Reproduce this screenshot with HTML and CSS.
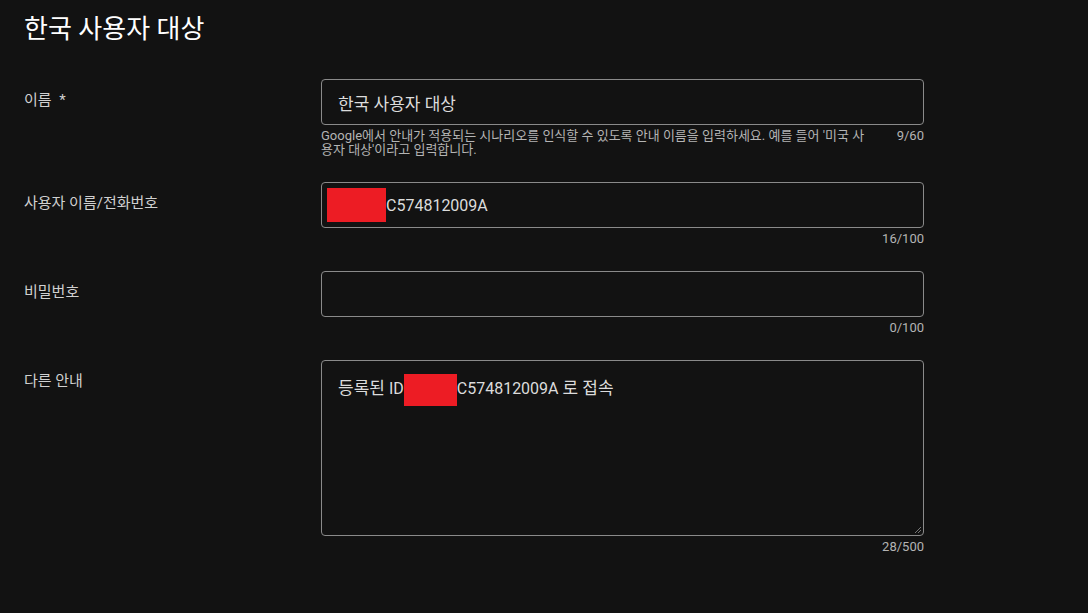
FILE: index.html
```html
<!DOCTYPE html>
<html lang="ko">
<head>
  <meta charset="UTF-8">
  <meta name="viewport" content="width=device-width, initial-scale=1.0">
  <title>한국 사용자 대상</title>
  <link rel="stylesheet" href="styles.css">
</head>
<body>
  <!-- 제목 -->
  <h1 class="page-title">한국 사용자 대상</h1>

  <!-- 안내 폼 -->
  <div class="form">
    <div class="row">
      <div class="label">이름 <span class="req">*</span></div>
      <div class="field">
        <div class="box"><span class="ko">한국 사용자 대상</span></div>
        <div class="hint">
          <span class="hint-text">Google에서 안내가 적용되는 시나리오를 인식할 수 있도록 안내 이름을 입력하세요. 예를 들어 '미국 사용자 대상'이라고 입력합니다.</span>
          <span class="count">9/60</span>
        </div>
      </div>
    </div>

    <div class="row">
      <div class="label">사용자 이름/전화번호</div>
      <div class="field">
        <div class="box box-id"><span class="redact redact-id"></span>C574812009A</div>
        <div class="hint"><span class="count">16/100</span></div>
      </div>
    </div>

    <div class="row">
      <div class="label">비밀번호</div>
      <div class="field">
        <div class="box"></div>
        <div class="hint"><span class="count">0/100</span></div>
      </div>
    </div>

    <div class="row">
      <div class="label">다른 안내</div>
      <div class="field">
        <div class="box box-area">
          <span class="ko">등록된</span> ID<span class="redact redact-area"></span>C574812009A <span class="ko">로 접속</span>
          <svg class="grip" width="10" height="10" viewBox="0 0 10 10">
            <path d="M9 3 L3 9 M9 6 L6 9" stroke="#777" stroke-width="1" fill="none"/>
          </svg>
        </div>
        <div class="hint"><span class="count">28/500</span></div>
      </div>
    </div>
  </div>
</body>
</html>
```

FILE: styles.css
```css
body {
  margin: 0;
  padding: 0 24px;
  background-color: #121212;
  color: #e3e3e3;
  font-family: Roboto, "Noto Sans CJK KR", sans-serif;
}

.page-title {
  margin: 0;
  padding-top: 12px;
  font-size: 26px;
  font-weight: 400;
  line-height: 34px;
  color: #ffffff;
}

.form {
  margin-top: 33px;
}

.row {
  display: grid;
  grid-template-columns: 297px 603px;
}

.label {
  padding-top: 13px;
  font-size: 15px;
  line-height: 16px;
  color: #d0d0d0;
}

.req {
  margin-left: 4px;
}

/* hangul a bit larger than latin, like the original font */
.ko {
  font-size: 17px;
}

.box {
  box-sizing: border-box;
  height: 46px;
  border: 1px solid #8a8a8a;
  border-radius: 4px;
  padding: 0 16px;
  display: flex;
  align-items: center;
  font-size: 16px;
  color: #dcdcdc;
}

.box-id {
  padding-left: 5px;
}

.box-area {
  position: relative;
  height: 176px;
  display: block;
  padding-top: 17px;
  line-height: 20px;
}

.redact {
  display: inline-block;
  background-color: #ed1c24;
  vertical-align: middle;
}

.redact-id {
  width: 59px;
  height: 34px;
}

.redact-area {
  width: 53px;
  height: 32px;
  margin-top: -6px;
  margin-bottom: -6px;
}

.grip {
  position: absolute;
  right: 1px;
  bottom: 1px;
}

.hint {
  display: flex;
  justify-content: flex-end;
  gap: 30px;
  margin-top: 4px;
  margin-bottom: 25px;
  font-size: 13px;
  line-height: 14px;
  color: #b4b4b4;
}

.hint-text {
  flex: 1;
}

.count {
  white-space: nowrap;
}
```
